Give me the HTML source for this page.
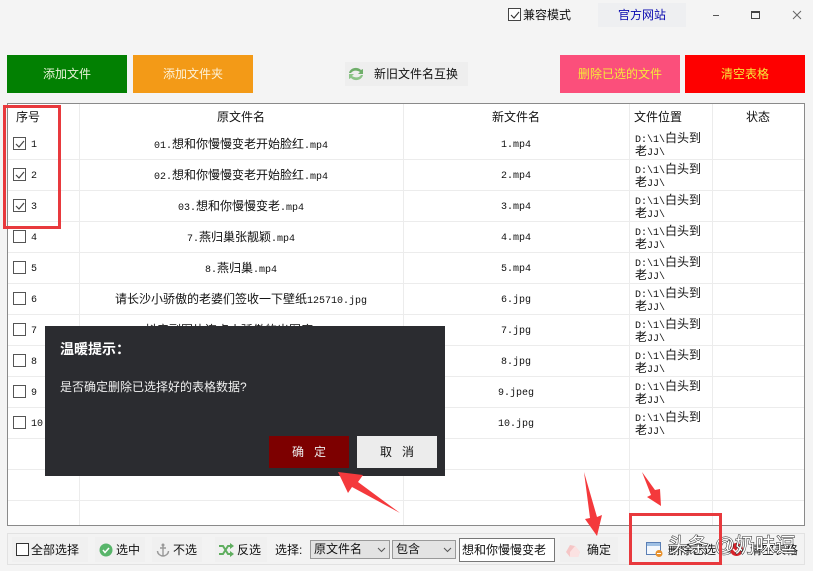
<!DOCTYPE html>
<html><head><meta charset="utf-8">
<style>
html,body{margin:0;padding:0}
body{width:813px;height:571px;background:#f4f4f4;position:relative;overflow:hidden;font-family:"Liberation Sans","WenQuanYi Zen Hei","Noto Sans CJK SC",sans-serif;font-size:12px;color:#111}
.a{position:absolute}
.t{position:absolute;white-space:nowrap;line-height:16px}
.c{text-align:center}
.btn{position:absolute;height:38px;top:55px;line-height:38px;text-align:center;font-size:12px}
.hl{position:absolute;left:8px;width:796px;height:1px;background:#ececec}
.vl{position:absolute;top:104px;height:421px;width:1px;background:#ececec}
.cb{position:absolute;width:11px;height:11px;border:1px solid #555;background:#fff;left:13px}
.n{position:absolute;left:31px;margin-top:2px;font-family:"Liberation Mono",monospace;font-size:10px;line-height:16px}
.f{position:absolute;left:79px;width:324px;margin-top:0;text-align:center;font-size:12px;line-height:16px;white-space:nowrap}
.g{position:absolute;left:404px;width:224px;margin-top:2px;text-align:center;font-family:"Liberation Mono",monospace;font-size:10px;line-height:16px}
.p{position:absolute;left:635px;width:76px;margin-top:1px;font-size:12px;line-height:13px;white-space:nowrap}
i{font-style:normal;font-family:"Liberation Mono",monospace;font-size:10px;line-height:0}
.h{position:absolute;top:109px;line-height:16px;font-size:12px;text-align:center}
.bb{position:absolute;top:537px;height:25px;background:#f0f0f0}
.sel{position:absolute;top:540px;height:19px;background:#e3e3e3;border:1px solid #999;box-sizing:border-box;line-height:17px;padding-left:3px;font-size:12px}
</style></head><body>

<!-- title bar -->
<div class="a" style="left:508px;top:8px;width:11px;height:11px;border:1px solid #444;background:#fff"></div>
<svg class="a" style="left:508px;top:8px" width="14" height="14"><path d="M3 7l3 3 5-6" fill="none" stroke="#333" stroke-width="1.1"/></svg>
<div class="t" style="left:523px;top:7px">兼容模式</div>
<div class="a" style="left:598px;top:3px;width:88px;height:24px;background:#eeeff1"></div>
<div class="t" style="left:618px;top:7px;color:#0a0ab0">官方网站</div>
<div class="a" style="left:713px;top:15px;width:6px;height:1px;background:#555"></div>
<div class="a" style="left:751px;top:11px;width:7px;height:5px;border:1px solid #444;border-top:2px solid #444"></div>
<svg class="a" style="left:792px;top:10px" width="11" height="11"><path d="M1 1l8 8M9 1l-8 8" stroke="#666" fill="none"/></svg>

<!-- top buttons -->
<div class="btn" style="left:7px;width:120px;background:#028002;color:#e8f2d8">添加文件</div>
<div class="btn" style="left:133px;width:120px;background:#f39a17;color:#fdf2d8">添加文件夹</div>
<div class="a" style="left:345px;top:62px;width:123px;height:24px;background:#eeeeee"></div>
<svg class="a" style="left:347px;top:65px" width="18" height="18" viewBox="0 0 18 18"><path d="M2 8C3 3 10 1 14 5l2-1v5h-5l2-2C10 5 6 5 4 8z" fill="#6fae6a"/><path d="M16 10c-1 5-8 7-12 3l-2 1V9h5l-2 2c3 2 7 2 9-1z" fill="#8cc487"/></svg>
<div class="t" style="left:374px;top:66px">新旧文件名互换</div>
<div class="btn" style="left:560px;width:120px;background:#fb4f7b;color:#f6ea3a">删除已选的文件</div>
<div class="btn" style="left:685px;width:120px;background:#fe0000;color:#f6ea3a">清空表格</div>

<!-- table -->
<div class="a" style="left:7px;top:103px;width:796px;height:421px;background:#fff;border:1px solid #8a8a8a"></div>
<div class="hl" style="top:159px"></div><div class="hl" style="top:190px"></div><div class="hl" style="top:221px"></div><div class="hl" style="top:252px"></div><div class="hl" style="top:283px"></div><div class="hl" style="top:314px"></div><div class="hl" style="top:345px"></div><div class="hl" style="top:376px"></div><div class="hl" style="top:407px"></div><div class="hl" style="top:438px"></div><div class="hl" style="top:469px"></div><div class="hl" style="top:500px"></div>
<div class="vl" style="left:79px"></div><div class="vl" style="left:403px"></div><div class="vl" style="left:629px"></div><div class="vl" style="left:712px"></div>

<div class="h" style="left:8px;width:40px">序号</div>
<div class="h" style="left:79px;width:324px">原文件名</div>
<div class="h" style="left:404px;width:224px">新文件名</div>
<div class="h" style="left:634px;width:48px">文件位置</div>
<div class="h" style="left:733px;width:50px">状态</div>

<div class="cb" style="top:137px"></div><svg class="a" style="left:13px;top:137px" width="14" height="14"><path d="M3 7l3 3 5-6" fill="none" stroke="#444" stroke-width="1.2"/></svg><div class="n" style="top:136px">1</div>
<div class="cb" style="top:168px"></div><svg class="a" style="left:13px;top:168px" width="14" height="14"><path d="M3 7l3 3 5-6" fill="none" stroke="#444" stroke-width="1.2"/></svg><div class="n" style="top:167px">2</div>
<div class="cb" style="top:199px"></div><svg class="a" style="left:13px;top:199px" width="14" height="14"><path d="M3 7l3 3 5-6" fill="none" stroke="#444" stroke-width="1.2"/></svg><div class="n" style="top:198px">3</div>
<div class="cb" style="top:230px"></div><div class="n" style="top:229px">4</div>
<div class="cb" style="top:261px"></div><div class="n" style="top:260px">5</div>
<div class="cb" style="top:292px"></div><div class="n" style="top:291px">6</div>
<div class="cb" style="top:323px"></div><div class="n" style="top:322px">7</div>
<div class="cb" style="top:354px"></div><div class="n" style="top:353px">8</div>
<div class="cb" style="top:385px"></div><div class="n" style="top:384px">9</div>
<div class="cb" style="top:416px"></div><div class="n" style="top:415px">10</div>

<div class="f" style="top:136px"><i>01.</i>想和你慢慢变老开始脸红<i>.mp4</i></div>
<div class="f" style="top:167px"><i>02.</i>想和你慢慢变老开始脸红<i>.mp4</i></div>
<div class="f" style="top:198px"><i>03.</i>想和你慢慢变老<i>.mp4</i></div>
<div class="f" style="top:229px"><i>7.</i>燕归巢张靓颖<i>.mp4</i></div>
<div class="f" style="top:260px"><i>8.</i>燕归巢<i>.mp4</i></div>
<div class="f" style="top:291px">请长沙小骄傲的老婆们签收一下壁纸<i>125710.jpg</i></div>
<div class="f" style="top:322px">抖音副图片连点小骄傲的出图库<i>.mp4</i></div>

<div class="g" style="top:136px">1.mp4</div>
<div class="g" style="top:167px">2.mp4</div>
<div class="g" style="top:198px">3.mp4</div>
<div class="g" style="top:229px">4.mp4</div>
<div class="g" style="top:260px">5.mp4</div>
<div class="g" style="top:291px">6.jpg</div>
<div class="g" style="top:322px">7.jpg</div>
<div class="g" style="top:353px">8.jpg</div>
<div class="g" style="top:384px">9.jpeg</div>
<div class="g" style="top:415px">10.jpg</div>

<div class="p" style="top:131px"><i>D:\1\</i>白头到<br>老<i>JJ\</i></div>
<div class="p" style="top:162px"><i>D:\1\</i>白头到<br>老<i>JJ\</i></div>
<div class="p" style="top:193px"><i>D:\1\</i>白头到<br>老<i>JJ\</i></div>
<div class="p" style="top:224px"><i>D:\1\</i>白头到<br>老<i>JJ\</i></div>
<div class="p" style="top:255px"><i>D:\1\</i>白头到<br>老<i>JJ\</i></div>
<div class="p" style="top:286px"><i>D:\1\</i>白头到<br>老<i>JJ\</i></div>
<div class="p" style="top:317px"><i>D:\1\</i>白头到<br>老<i>JJ\</i></div>
<div class="p" style="top:348px"><i>D:\1\</i>白头到<br>老<i>JJ\</i></div>
<div class="p" style="top:379px"><i>D:\1\</i>白头到<br>老<i>JJ\</i></div>
<div class="p" style="top:410px"><i>D:\1\</i>白头到<br>老<i>JJ\</i></div>

<!-- dialog -->
<div class="a" style="left:45px;top:326px;width:400px;height:150px;background:#2b2c30"></div>
<div class="t" style="left:60px;top:341px;color:#fff;font-size:14px;font-weight:bold">温暖提示：</div>
<div class="t" style="left:60px;top:379px;color:#f0f0f0;font-size:12px">是否确定删除已选择好的表格数据?</div>
<div class="a c" style="left:269px;top:436px;width:80px;height:32px;line-height:32px;background:#7d0000;color:#eee">确&nbsp;&nbsp;&nbsp;定</div>
<div class="a c" style="left:357px;top:436px;width:80px;height:32px;line-height:32px;background:#ececec;color:#111">取&nbsp;&nbsp;&nbsp;消</div>

<!-- bottom bar -->
<div class="a" style="left:7px;top:533px;width:798px;height:32px;box-sizing:border-box;border:1px solid #e2e2e2;background:#f3f3f3"></div>
<div class="bb" style="left:12px;width:76px"></div>
<div class="a" style="left:16px;top:543px;width:11px;height:11px;border:1px solid #333;background:#fff"></div>
<div class="t" style="left:31px;top:542px">全部选择</div>
<div class="bb" style="left:95px;width:50px"></div>
<svg class="a" style="left:99px;top:543px" width="14" height="14"><circle cx="7" cy="7" r="6.5" fill="#58b56a"/><path d="M4 7l2 2.5 4-4.500" stroke="#fff" stroke-width="1.500" fill="none"/></svg>
<div class="t" style="left:116px;top:542px">选中</div>
<div class="bb" style="left:152px;width:50px"></div>
<svg class="a" style="left:156px;top:543px" width="14" height="14"><path d="M7 3v10M4 5h6M1.500 8c0 3 3 5 5.500 5s5.500-2 5.500-5" fill="none" stroke="#999" stroke-width="1.400"/><circle cx="7" cy="2" r="1.500" fill="#999"/></svg>
<div class="t" style="left:173px;top:542px">不选</div>
<div class="bb" style="left:215px;width:52px"></div>
<svg class="a" style="left:218px;top:543px" width="16" height="14"><path d="M1 3h4l5 8h3M1 11h4l5-8h3" fill="none" stroke="#5fae5f" stroke-width="2"/><path d="M12 0l4 3-4 3zM12 8l4 3-4 3z" fill="#5fae5f"/></svg>
<div class="t" style="left:237px;top:542px">反选</div>
<div class="t" style="left:275px;top:542px">选择:</div>
<div class="sel" style="left:310px;width:80px">原文件名<svg class="a" style="left:66px;top:6px" width="9" height="6"><path d="M1 1l3.500 3.500L8 1" fill="none" stroke="#555"/></svg></div>
<div class="sel" style="left:392px;width:64px">包含<svg class="a" style="left:50px;top:6px" width="9" height="6"><path d="M1 1l3.500 3.500L8 1" fill="none" stroke="#555"/></svg></div>
<div class="a" style="left:459px;top:538px;width:96px;height:24px;box-sizing:border-box;border:1px solid #777;background:#fff;line-height:22px;padding-left:2px;white-space:nowrap;overflow:hidden">想和你慢慢变老</div>
<div class="bb" style="left:560px;width:58px"></div>
<svg class="a" style="left:565px;top:543px" width="17" height="15"><path d="M1 9l4-7 5 1 5 6-2 5H5z" fill="#f5c6c6"/><path d="M5 9l5-6 5 6-2 5H5z" fill="#fbe2e2"/></svg>
<div class="t" style="left:587px;top:542px">确定</div>
<svg class="a" style="left:646px;top:542px" width="17" height="15"><rect x="0.500" y="0.500" width="14" height="12" fill="#f4f8fd" stroke="#5b7fb5"/><rect x="1" y="1" width="13" height="3" fill="#9fc0e4"/><circle cx="13" cy="11.500" r="3.500" fill="#e8912c"/><path d="M11 11.500h4" stroke="#fff"/></svg>
<div class="t" style="left:668px;top:542px">删除已选</div>
<svg class="a" style="left:729px;top:542px" width="15" height="15"><circle cx="7.500" cy="7.500" r="6.500" fill="#d8232a"/><path d="M4 7l3 3 4-6" stroke="#fff" stroke-width="1.500" fill="none"/></svg>
<div class="t" style="left:750px;top:542px">清空表格</div>

<!-- watermark -->
<div class="t" style="left:668px;top:533px;font-size:20px;line-height:26px;color:#fff;-webkit-text-stroke:1px #222;paint-order:stroke fill;letter-spacing:0.300px">头条 @奶味逗</div>

<!-- annotations -->
<div class="a" style="left:3px;top:105px;width:58px;height:124px;box-sizing:border-box;border:3px solid #e8393d"></div>
<div class="a" style="left:629px;top:513px;width:93px;height:52px;box-sizing:border-box;border:3px solid #e8393d"></div>
<svg class="a" style="left:0;top:0" width="813" height="571">
<path d="M338 472L363 475 358 482 400 513 352 487 348 493z" fill="#f4393c"/>
<path d="M584 472L597 517 602 515 597 536 585 519 590 518z" fill="#f4393c"/>
<path d="M642 472L655 490 660 489 661 506 647 497 651 495z" fill="#f4393c"/>
</svg>
</body></html>
